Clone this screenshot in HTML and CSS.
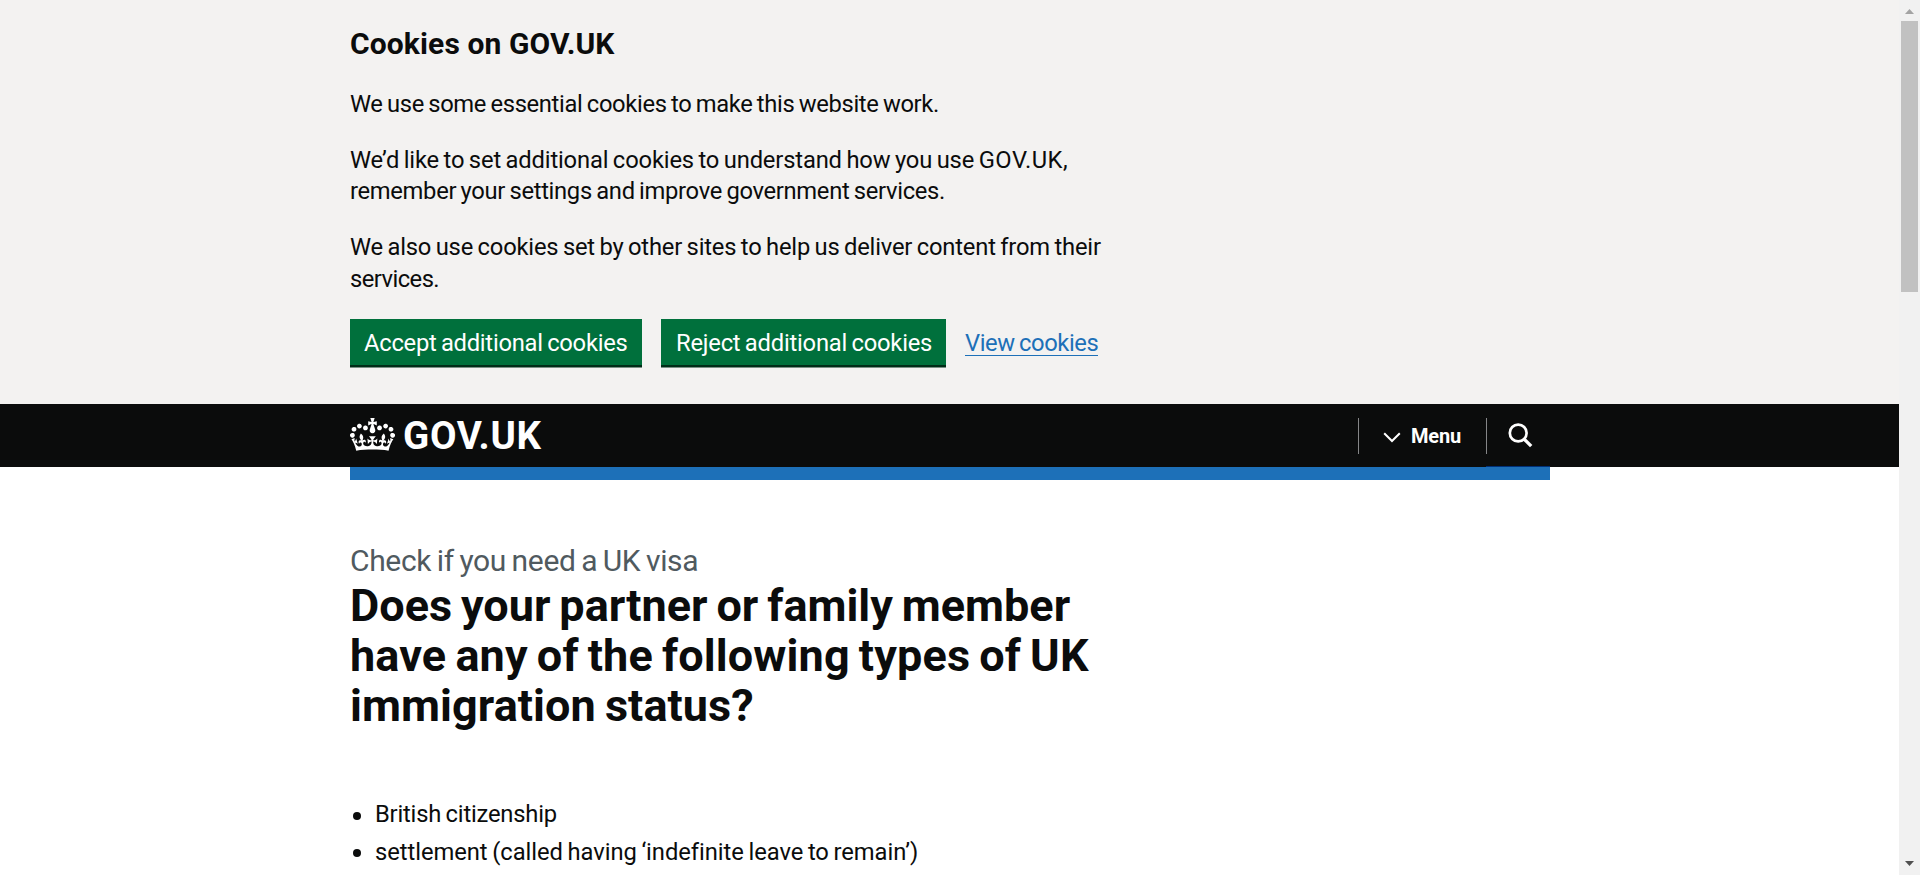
FILE: index.html
```html
<!DOCTYPE html>
<html lang="en">
<head>
<meta charset="utf-8">
<title>Check if you need a UK visa - GOV.UK</title>
<link rel="stylesheet" href="styles.css">
</head>
<body>
<div class="viewport">
  <div class="page">
    <section class="cookies">
      <div class="container">
        <h2 class="cookies-title"><span class="t1">Cookies on GOV.UK</span></h2>
        <p class="body"><span class="t2">We use some essential cookies to make this website work.</span></p>
        <p class="body"><span class="t3">We’d like to set additional cookies to understand how you use <span class="caps">GOV.UK,</span></span><br><span class="t4">remember your settings and improve government services.</span></p>
        <p class="body"><span class="t5">We also use cookies set by other sites to help us deliver content from their</span><br><span class="t6">services.</span></p>
        <div class="actions">
          <button class="button accept"><span class="t7">Accept additional cookies</span></button>
          <button class="button reject"><span class="t8">Reject additional cookies</span></button>
          <a class="link"><span class="t9">View cookies</span></a>
        </div>
      </div>
    </section>
    <header class="header">
      <div class="container header-row">
        <a class="logo">
          <svg class="crown" viewBox="0 0 132 97" preserveAspectRatio="none" fill="currentColor"><path d="M25 30.2c3.5 1.5 7.7-.2 9.1-3.7 1.5-3.6-.2-7.8-3.9-9.2-3.6-1.4-7.6.3-9.1 3.9-1.4 3.5.3 7.5 3.9 9zM9 39.5c3.6 1.5 7.8-.2 9.2-3.7 1.5-3.6-.2-7.8-3.9-9.1-3.6-1.5-7.6.2-9.1 3.8-1.4 3.5.3 7.5 3.8 9zM4.4 57.2c3.5 1.5 7.7-.2 9.1-3.8 1.5-3.6-.2-7.7-3.9-9.1-3.5-1.5-7.6.3-9.1 3.8-1.4 3.5.3 7.6 3.9 9.1zm38.3-21.4c3.5 1.5 7.7-.2 9.1-3.8 1.5-3.6-.2-7.7-3.9-9.1-3.6-1.5-7.6.3-9.1 3.8-1.3 3.6.4 7.7 3.9 9.1zm64.4-5.6c-3.6 1.5-7.8-.2-9.1-3.7-1.5-3.6.2-7.8 3.8-9.2 3.6-1.4 7.7.3 9.2 3.9 1.3 3.5-.4 7.5-3.9 9zm15.9 9.3c-3.6 1.5-7.7-.2-9.1-3.7-1.5-3.6.2-7.8 3.7-9.1 3.6-1.5 7.7.2 9.2 3.8 1.5 3.5-.3 7.5-3.8 9zm4.7 17.7c-3.6 1.5-7.8-.2-9.2-3.8-1.5-3.6.2-7.7 3.9-9.1 3.6-1.5 7.7.3 9.2 3.8 1.3 3.5-.4 7.6-3.9 9.1zM89.3 35.8c-3.6 1.5-7.8-.2-9.2-3.8-1.4-3.6.2-7.7 3.9-9.1 3.6-1.5 7.7.3 9.2 3.8 1.4 3.6-.3 7.7-3.9 9.1zM69.7 17.7l8.9 4.7V9.3l-8.9 2.8c-.2-.3-.5-.6-.9-.9L72.4 0H59.6l3.5 11.2c-.3.3-.6.5-.9.9l-8.8-2.8v13.1l8.8-4.7c.3.3.6.7.9.9l-5 15.4v.1c-.2.8-.4 1.6-.4 2.4 0 4.1 3.1 7.5 7 8.1h.2c.3 0 .7.1 1 .1.4 0 .7 0 1-.1h.2c4-.6 7.1-4.1 7.1-8.1 0-.8-.1-1.7-.4-2.4V34l-5.1-15.4c.4-.2.7-.6 1-.9zM66 92.8c16.9 0 32.8 1.1 47.1 3.2 4-16.9 8.9-26.7 14-33.5l-9.6-3.4c1 4.9 1.1 7.2 0 10.2-1.5-1.4-3-4.3-4.2-8.7L108.6 76c2.8-2 5-3.2 7.5-3.3-4.4 9.4-10 11.9-13.6 11.2-4.3-.8-6.3-4.6-5.6-7.9 1-4.7 5.7-5.9 8-.5 4.3-8.7-3-11.4-7.6-8.8 7.1-7.2 7.9-13.5 2.1-21.1-8 6.1-8.1 12.3-4.5 20.8-4.7-5.4-12.1-2.5-9.5 6.2 3.4-5.2 7.9-2 7.2 3.1-.6 4.3-6.4 7.8-13.5 7.2-10.3-.9-10.9-8-11.2-13.8 2.5-.5 7.1 1.8 11 7.3L80.2 60c-4.1 4.4-8 5.3-12.3 5.4 1.4-4.4 8-11.6 8-11.6H55.5s6.4 7.2 7.9 11.6c-4.2-.1-8-1-12.3-5.4l1.4 16.4c3.9-5.5 8.5-7.7 10.9-7.3-.3 5.8-.9 12.8-11.1 13.8-7.2.6-12.9-2.9-13.5-7.2-.7-5 3.8-8.3 7.1-3.1 2.7-8.7-4.6-11.6-9.4-6.2 3.7-8.5 3.6-14.7-4.6-20.8-5.8 7.6-5 13.9 2.2 21.1-4.7-2.6-11.9.1-7.7 8.8 2.3-5.5 7.1-4.2 8.1.5.7 3.3-1.3 7.1-5.7 7.9-3.5.7-9-1.8-13.5-11.2 2.5.1 4.7 1.3 7.5 3.3l-4.7-15.4c-1.2 4.4-2.7 7.2-4.3 8.7-1.1-3-.9-5.3 0-10.2l-9.5 3.4c5 6.9 9.9 16.7 14 33.5 14.8-2.1 30.8-3.2 47.7-3.2z"/></svg>
          <span class="logo-text">GOV.UK</span>
        </a>
        <nav class="nav">
          <a class="menu">
            <svg class="chevron" viewBox="0 0 18 11" fill="none" stroke="currentColor" stroke-width="2"><path d="M1.2 1.2 9 9l7.8-7.8"/></svg>
            <span class="menu-text">Menu</span>
          </a>
          <a class="search">
            <svg class="glass" viewBox="0 0 25 25" fill="none" stroke="currentColor"><circle cx="10.2" cy="10" r="8.4" stroke-width="2.7"/><path d="m16 16 7.2 7.2" stroke-width="3.3"/></svg>
          </a>
        </nav>
      </div>
    </header>
    <div class="container"><div class="bluebar"></div></div>
    <main class="container main">
      <span class="caption"><span class="t10">Check if you need a UK visa</span></span>
      <h1 class="heading"><span class="t11">Does your partner or family member</span><br><span class="t12">have any of the following types of UK</span><br><span class="t13">immigration status?</span></h1>
      <ul class="list">
        <li><span class="t14">British citizenship</span></li>
        <li><span class="t15">settlement (called having ‘indefinite leave to remain’)</span></li>
      </ul>
    </main>
  </div>
  <div class="scrollbar">
    <svg class="arrow up" viewBox="0 0 9 5"><path d="M4.5 0 9 5H0z"/></svg>
    <div class="thumb"></div>
    <svg class="arrow down" viewBox="0 0 9 5"><path d="M0 0h9L4.5 5z"/></svg>
  </div>
</div>
</body>
</html>
```
FILE: styles.css
```css
* { box-sizing: border-box; }
body { margin: 0; background: #fff; color: #0b0c0c; font-family: Roboto, "Liberation Sans", sans-serif; font-size: 23.75px; line-height: 31.25px; word-spacing: -1.2px; }
.viewport { display: flex; width: 1920px; height: 875px; overflow: hidden; }
.page { width: 1899px; height: 875px; overflow: hidden; }
.container { width: 1200px; margin-left: 350px; white-space: nowrap; }
.cookies { height: 404px; padding-top: 25px; background: #f3f2f1; }
.cookies-title { margin: 0 0 26px; font-size: 30px; line-height: 37.5px; font-weight: 700; word-spacing: 0; }
.body { margin: 0 0 25px; }
.actions { display: flex; align-items: flex-start; margin-top: -25.75px; padding-top: 25px; }
.button { height: 48px; margin: 0; padding: 4px 14px 0; border: 0; border-bottom: 2px solid #002d18; box-shadow: 0 1px #7a8f85; background: #00703c; color: #fff; font: inherit; word-spacing: inherit; text-align: left; white-space: nowrap; }
.accept { width: 292px; margin-right: 19px; }
.reject { width: 285px; margin-right: 19px; padding-left: 15px; }
.link { height: 37px; padding-top: 9px; width: 133px; border-bottom: 1px solid #1d70b8; color: #1d70b8; }
.header { height: 63px; background: #0b0c0c; color: #fff; }
.header-row { display: flex; justify-content: space-between; height: 63px; }
.logo { display: flex; color: #fff; }
.crown { width: 45px; height: 33px; margin-top: 14px; }
.logo-text { margin-left: 8px; font-size: 38.5px; line-height: 63px; font-weight: 700; letter-spacing: 0.7px; }
.nav { display: flex; padding-top: 14px; }
.menu { display: flex; width: 128px; height: 36px; padding-left: 24px; border-left: 1px solid #858688; }
.chevron { width: 18px; height: 11px; margin: 14px 10px 0 0; }
.menu-text { font-size: 20px; line-height: 37px; font-weight: 700; letter-spacing: -0.2px; }
.search { width: 64px; height: 49px; padding-left: 21px; border-bottom: 1px solid #003078; background: linear-gradient(#858688, #858688) 0 0 / 1px 36px no-repeat; }
.glass { display: block; width: 25px; height: 25px; margin: 5px 0 0 0.5px; }
.bluebar { height: 13px; background: #1d70b8; }
.main { padding-top: 62px; }
.caption { display: block; margin-bottom: 1px; font-size: 30px; line-height: 37.5px; color: #505a5f; word-spacing: -1.5px; }
.heading { margin: 0 0 68.5px; font-size: 45px; line-height: 50px; font-weight: 700; word-spacing: -2.2px; }
.list { margin: 0; padding: 0; list-style: none; }
.list li { display: flex; align-items: center; margin-bottom: 6.5px; }
.list li::before { content: ""; width: 8px; height: 8px; margin: 2px 14px 0 3px; border-radius: 50%; background: #0b0c0c; }
.t1 { letter-spacing: 0.12px; }
.t2 { letter-spacing: -0.34px; }
.t3 { letter-spacing: -0.16px; }
.caps { letter-spacing: 0.5px; }
.t4 { letter-spacing: -0.31px; }
.t5 { letter-spacing: -0.19px; }
.t6 { letter-spacing: -0.54px; }
.t7 { letter-spacing: -0.26px; }
.t8 { letter-spacing: -0.22px; }
.t9 { letter-spacing: -0.4px; }
.t10 { letter-spacing: -0.34px; }
.t11 { letter-spacing: -0.01px; }
.t12 { letter-spacing: 0.13px; }
.t13 { letter-spacing: 0.07px; }
.t14 { letter-spacing: -0.2px; }
.t15 { letter-spacing: -0.05px; }
.scrollbar { display: flex; flex-direction: column; align-items: center; width: 21px; height: 875px; padding: 9px 0; background: #f1f1f1; }
.arrow { width: 9px; height: 5px; }
.up { fill: #a3a3a3; }
.down { margin-top: auto; fill: #505050; }
.thumb { width: 17px; height: 271px; margin-top: 7px; background: #c1c1c1; }
```
